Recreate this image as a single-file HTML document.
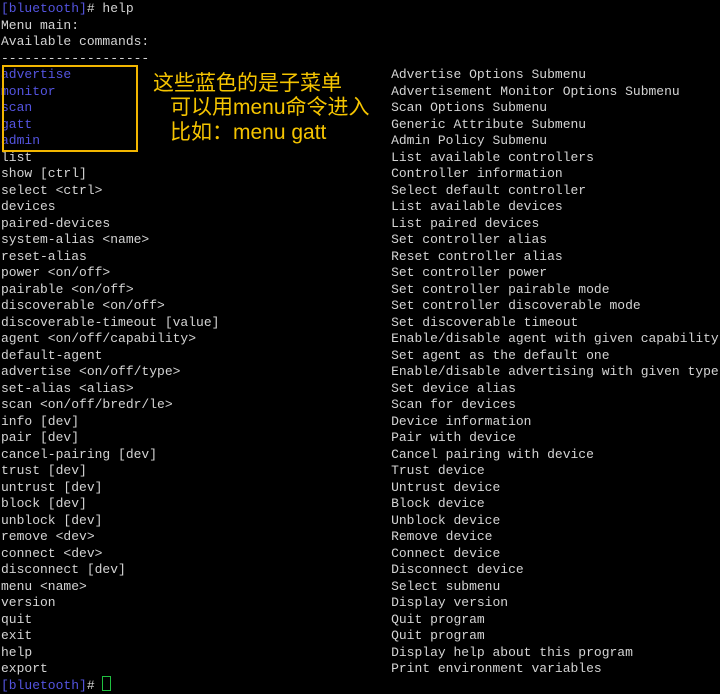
<!DOCTYPE html>
<html><head><meta charset="utf-8"><style>
html,body{margin:0;padding:0;background:#000;width:720px;height:693px;overflow:hidden}
pre{margin:0;position:absolute;left:1px;top:1px;font:13px/16.5px "Liberation Mono",monospace;color:#d4d4d4;white-space:pre}
.b{color:#5454e0}
.box{position:absolute;left:2px;top:65px;width:132px;height:83px;border:2px solid #f2b600}
.cn{position:absolute;color:#f5c400;font:21px/24px "Liberation Sans","Noto Sans CJK SC",sans-serif;white-space:nowrap}
.cur{position:absolute;left:102px;top:676px;width:7px;height:13px;border:1.5px solid #20c040}
</style></head><body>
<pre><span class="b">[bluetooth]</span># help
Menu main:
Available commands:
-------------------
<span class="b">advertise</span>                                         Advertise Options Submenu
<span class="b">monitor</span>                                           Advertisement Monitor Options Submenu
<span class="b">scan</span>                                              Scan Options Submenu
<span class="b">gatt</span>                                              Generic Attribute Submenu
<span class="b">admin</span>                                             Admin Policy Submenu
list                                              List available controllers
show [ctrl]                                       Controller information
select &lt;ctrl&gt;                                     Select default controller
devices                                           List available devices
paired-devices                                    List paired devices
system-alias &lt;name&gt;                               Set controller alias
reset-alias                                       Reset controller alias
power &lt;on/off&gt;                                    Set controller power
pairable &lt;on/off&gt;                                 Set controller pairable mode
discoverable &lt;on/off&gt;                             Set controller discoverable mode
discoverable-timeout [value]                      Set discoverable timeout
agent &lt;on/off/capability&gt;                         Enable/disable agent with given capability
default-agent                                     Set agent as the default one
advertise &lt;on/off/type&gt;                           Enable/disable advertising with given type
set-alias &lt;alias&gt;                                 Set device alias
scan &lt;on/off/bredr/le&gt;                            Scan for devices
info [dev]                                        Device information
pair [dev]                                        Pair with device
cancel-pairing [dev]                              Cancel pairing with device
trust [dev]                                       Trust device
untrust [dev]                                     Untrust device
block [dev]                                       Block device
unblock [dev]                                     Unblock device
remove &lt;dev&gt;                                      Remove device
connect &lt;dev&gt;                                     Connect device
disconnect [dev]                                  Disconnect device
menu &lt;name&gt;                                       Select submenu
version                                           Display version
quit                                              Quit program
exit                                              Quit program
help                                              Display help about this program
export                                            Print environment variables
<span class="b">[bluetooth]</span># </pre>
<div class="box"></div>
<div class="cn" style="left:153px;top:72px">这些蓝色的是子菜单</div>
<div class="cn" style="left:170px;top:96px">可以用menu命令进入</div>
<div class="cn" style="left:170px;top:121px">比如：menu gatt</div>
<div class="cur"></div>
</body></html>
